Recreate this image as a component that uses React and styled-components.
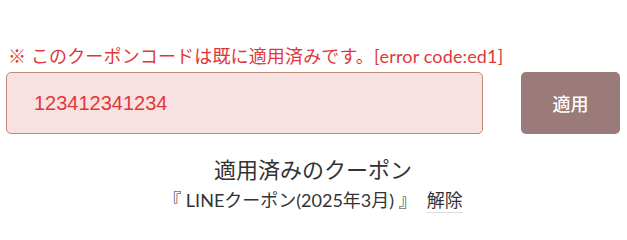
import React from "react";
import styled, { createGlobalStyle } from "styled-components";

const Global = createGlobalStyle`
  html, body { margin: 0; padding: 0; background: #fff; }
  body { font-family: Lato, "Noto Sans CJK JP", sans-serif; }
`;

const Wrap = styled.div`
  width: 627px;
  height: 225px;
  box-sizing: border-box;
  padding: 43px 7px 0 6px;
`;

const ErrorText = styled.p`
  margin: 0 0 0 2px;
  color: #e0383a;
  font-size: 18px;
  line-height: 26px;
  letter-spacing: 0.15px;
  white-space: nowrap;
`;

const Row = styled.div`
  display: flex;
  align-items: stretch;
  gap: 38px;
  margin-top: 3px;
  height: 62px;
`;

const CodeInput = styled.input`
  flex: 1;
  box-sizing: border-box;
  background: #f8e1e1;
  border: 1px solid #c08a78;
  border-radius: 5px;
  padding: 0 0 0 27px;
  font-family: "Liberation Sans", Arial, sans-serif;
  font-size: 20px;
  color: #e0383a;
  outline: none;
`;

const ApplyButton = styled.button`
  width: 99px;
  flex: none;
  border: none;
  border-radius: 5px;
  background: #9b7b79;
  color: #fff;
  font-family: "Noto Sans CJK JP", sans-serif;
  font-size: 18px;
  font-weight: 500;
  cursor: pointer;
`;

const Applied = styled.div`
  display: flex;
  flex-direction: column;
  align-items: center;
  margin-top: 21px;
  color: #333;
`;

const Title = styled.div`
  font-size: 22px;
  line-height: 30px;
`;

const CouponLine = styled.div`
  display: flex;
  align-items: baseline;
  gap: 10px;
  margin-top: 1px;
  font-size: 18px;
  line-height: 28px;
`;

const Remove = styled.span`
  border-bottom: 1px solid #ddd;
  line-height: 24px;
  cursor: pointer;
`;

export default function App() {
  return (
    <>
      <Global />
      <Wrap>
        <ErrorText>※ このクーポンコードは既に適用済みです。[error code:ed1]</ErrorText>
        <Row>
          <CodeInput defaultValue="123412341234" />
          <ApplyButton>適用</ApplyButton>
        </Row>
        <Applied>
          <Title>適用済みのクーポン</Title>
          <CouponLine>
            <span>『 LINEクーポン(2025年3月) 』</span>
            <Remove>解除</Remove>
          </CouponLine>
        </Applied>
      </Wrap>
    </>
  );
}
